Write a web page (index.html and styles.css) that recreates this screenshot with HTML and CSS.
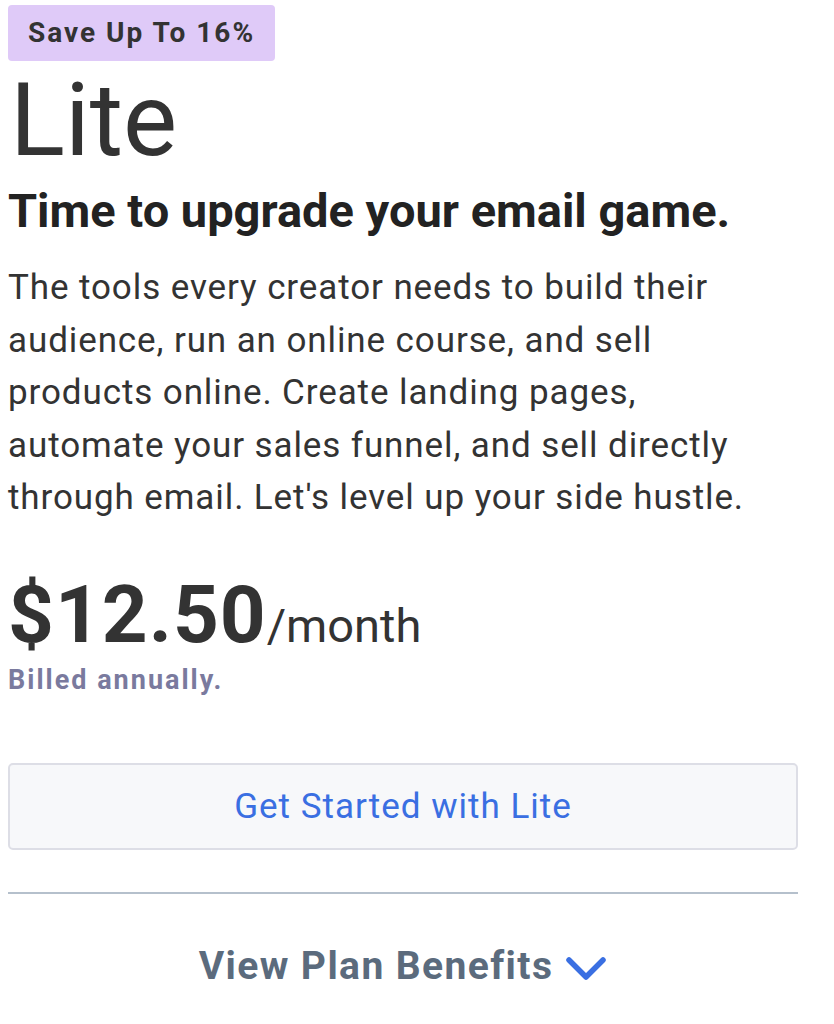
FILE: index.html
```html
<!DOCTYPE html>
<html lang="en">
<head>
    <meta charset="UTF-8">
    <meta name="viewport" content="width=device-width, initial-scale=1.0">
    <title>Lite Plan</title>
    <link rel="stylesheet" href="styles.css">
</head>
<body>
    <div class="plan">
        <span class="badge">Save Up To 16%</span>
        <h1 class="plan-name">Lite</h1>
        <h2 class="tagline">Time to upgrade your email game.</h2>
        <p class="description">The tools every creator needs to build their audience, run an online course, and sell products online. Create landing pages, automate your sales funnel, and sell directly through email. Let's level up your side hustle.</p>

        <div class="price">
            <span class="amount">$12.50</span><span class="period">/month</span>
        </div>
        <div class="billing">Billed annually.</div>

        <button class="cta" type="button">Get Started with Lite</button>

        <hr class="divider">

        <button class="benefits" type="button">
            View Plan Benefits
            <svg class="chevron" width="42" height="26" viewBox="0 0 42 26">
                <path d="M4 4 L21 21 L38 4" fill="none" stroke="#3a6fe2" stroke-width="5.5" stroke-linecap="round" stroke-linejoin="round"/>
            </svg>
        </button>
    </div>
</body>
</html>
```

FILE: styles.css
```css
body {
    font-family: Roboto, "Liberation Sans", Arial, sans-serif;
    background-color: #fff;
    color: #333;
    margin: 0;
    padding: 0;
}
.plan {
    width: 790px;
    padding: 5px 0 0 8px;
    display: flex;
    flex-direction: column;
    align-items: flex-start;
}
.badge {
    display: inline-block;
    background-color: #dfcaf8;
    color: #333;
    font-size: 28px;
    font-weight: 700;
    letter-spacing: 2px;
    line-height: 56px;
    height: 56px;
    padding: 0 20px;
    border-radius: 4px;
}
.plan-name {
    font-size: 102px;
    font-weight: 400;
    line-height: 1;
    margin: 8px 0 0 2px;
}
.tagline {
    font-size: 47px;
    font-weight: 700;
    line-height: 56px;
    margin: 12px 0 0;
    color: #222;
}
.description {
    width: 760px;
    font-size: 35px;
    letter-spacing: 0.9px;
    line-height: 1.5;
    margin: 23px 0 0;
}
.price {
    margin-top: 50px;
    line-height: 1;
}
.amount {
    font-size: 80px;
    font-weight: 700;
    letter-spacing: 1px;
}
.period {
    font-size: 47px;
}
.billing {
    font-size: 27px;
    font-weight: 700;
    letter-spacing: 2px;
    color: #7a7a9e;
    line-height: 1.2;
    margin-top: 9px;
}
.cta {
    width: 790px;
    height: 87px;
    margin-top: 67px;
    background-color: #f7f8fa;
    border: 2px solid #dddee6;
    border-radius: 5px;
    color: #3a6fe2;
    font-family: inherit;
    font-size: 35px;
    letter-spacing: 1px;
    cursor: pointer;
}
.divider {
    width: 790px;
    border: none;
    border-top: 2px solid #b5c0cc;
    margin: 42px 0 0;
}
.benefits {
    align-self: stretch;
    display: flex;
    justify-content: center;
    align-items: center;
    gap: 12px;
    margin-top: 49px;
    background: none;
    border: none;
    font-family: inherit;
    font-size: 39px;
    font-weight: 700;
    letter-spacing: 1.4px;
    color: #5b6b7d;
    padding: 0;
    cursor: pointer;
}
.chevron {
    margin-top: 6px;
}
```
